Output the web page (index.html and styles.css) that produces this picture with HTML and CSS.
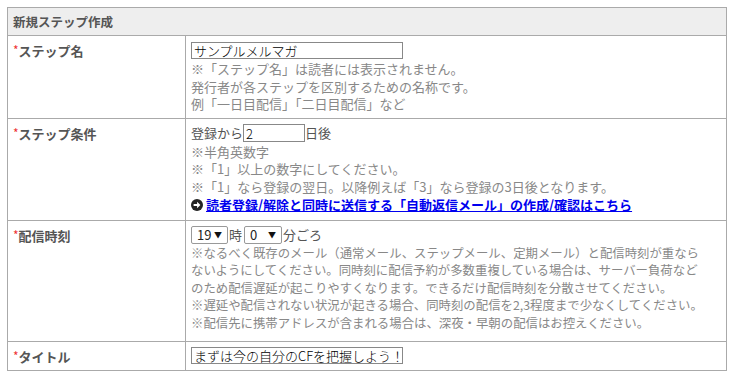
FILE: index.html
```html
<!DOCTYPE html>
<html lang="ja">
<head>
    <meta charset="UTF-8">
    <title>新規ステップ作成</title>
    <link rel="stylesheet" href="styles.css">
</head>
<body>

<!-- Step form -->
<table class="step-table">
    <tr>
        <th colspan="2" class="table-head">新規ステップ作成</th>
    </tr>
    <tr>
        <th class="label"><span class="req">*</span>ステップ名</th>
        <td>
            <div class="field-row"><input type="text" class="text-input wide" value="サンプルメルマガ"></div>
            <div class="note">※「ステップ名」は読者には表示されません。<br>
            発行者が各ステップを区別するための名称です。<br>
            例「一日目配信」「二日目配信」など</div>
        </td>
    </tr>
    <tr>
        <th class="label"><span class="req">*</span>ステップ条件</th>
        <td>
            <div class="field-row">登録から<input type="text" class="text-input short" value="2">日後</div>
            <div class="note">※半角英数字<br>
            ※「1」以上の数字にしてください。<br>
            ※「1」なら登録の翌日。以降例えば「3」なら登録の3日後となります。</div>
            <a href="#" class="link">
                <svg class="arrow-icon" width="12" height="12" viewBox="0 0 12 12"><circle cx="6" cy="6" r="6" fill="#222"/><path d="M2.6 5.1h3.5V2.8l3.3 3.2-3.3 3.2V6.9H2.6z" fill="#fff"/></svg>
                <span class="link-text">読者登録/解除と同時に送信する「自動返信メール」の作成/確認はこちら</span>
            </a>
        </td>
    </tr>
    <tr>
        <th class="label"><span class="req">*</span>配信時刻</th>
        <td class="time-cell">
            <div class="field-row">
                <span class="select hour">19 <i>▼</i></span>時
                <span class="select minute">0 <i>▼</i></span>分ごろ
            </div>
            <div class="note long">※なるべく既存のメール（通常メール、ステップメール、定期メール）と配信時刻が重なら<br>
            ないようにしてください。同時刻に配信予約が多数重複している場合は、サーバー負荷など<br>
            のため配信遅延が起こりやすくなります。できるだけ配信時刻を分散させてください。<br>
            ※遅延や配信されない状況が起きる場合、同時刻の配信を2,3程度まで少なくしてください。<br>
            ※配信先に携帯アドレスが含まれる場合は、深夜・早朝の配信はお控えください。</div>
        </td>
    </tr>
    <tr>
        <th class="label"><span class="req">*</span>タイトル</th>
        <td>
            <div class="field-row last"><input type="text" class="text-input wide" value="まずは今の自分のCFを把握しよう！"></div>
        </td>
    </tr>
</table>

</body>
</html>
```

FILE: styles.css
```css
/* General styles */
body {
    margin: 7px;
    background-color: #fff;
    font-family: "Noto Sans CJK JP", "Noto Sans", sans-serif;
    font-size: 13px;
    line-height: 17.6px;
    color: #555;
}

/* Table */
.step-table {
    width: 720px;
    border-collapse: collapse;
}

.step-table th,
.step-table td {
    border: 1px solid #aaa;
    vertical-align: top;
    text-align: left;
}

.table-head {
    background-color: #eee;
    font-weight: bold;
    font-size: 12.5px;
    color: #555;
    height: 27px;
    padding: 0 5px;
    vertical-align: middle !important;
}

.label {
    width: 167px;
    padding: 5px 5px 5px 5px;
    font-weight: bold;
    color: #555;
}

.req {
    color: #e33;
    font-weight: normal;
    font-size: 12px;
    vertical-align: 1px;
}

.step-table td {
    padding: 5px 5px 5px 5px;
}

.time-cell {
    padding-bottom: 8px !important;
}

/* Inputs */
.field-row {
    height: 19px;
    display: flex;
    align-items: center;
    white-space: nowrap;
}

.field-row.last {
    height: 18px;
}

.text-input {
    box-sizing: border-box;
    height: 17px;
    border: 1px solid #888;
    padding: 0 2px;
    margin: 0;
    font-family: "Noto Sans CJK JP", sans-serif;
    font-size: 13px;
    font-weight: 300;
    line-height: 15px;
    color: #000;
}

.text-input.wide {
    width: 212px;
}

.text-input.short {
    width: 62px;
    height: 18px;
}

.select {
    box-sizing: border-box;
    display: inline-flex;
    align-items: center;
    justify-content: space-between;
    height: 18px;
    border: 1px solid #999;
    border-radius: 2px;
    padding: 0 5px 0 5px;
    color: #222;
    margin-right: 1px;
}

.select.hour {
    width: 37px;
}

.select.minute {
    width: 38px;
    margin-left: 2px;
}

.select i {
    font-style: normal;
    font-size: 8px;
    color: #111;
}

.note {
    color: #888;
    white-space: nowrap;
}

.note.long {
    font-size: 12.4px;
}

/* Link to auto reply */
.link {
    display: flex;
    align-items: center;
    gap: 3px;
    height: 19px;
    color: #00e;
    font-weight: bold;
    white-space: nowrap;
}

.arrow-icon {
    flex-shrink: 0;
}
```
